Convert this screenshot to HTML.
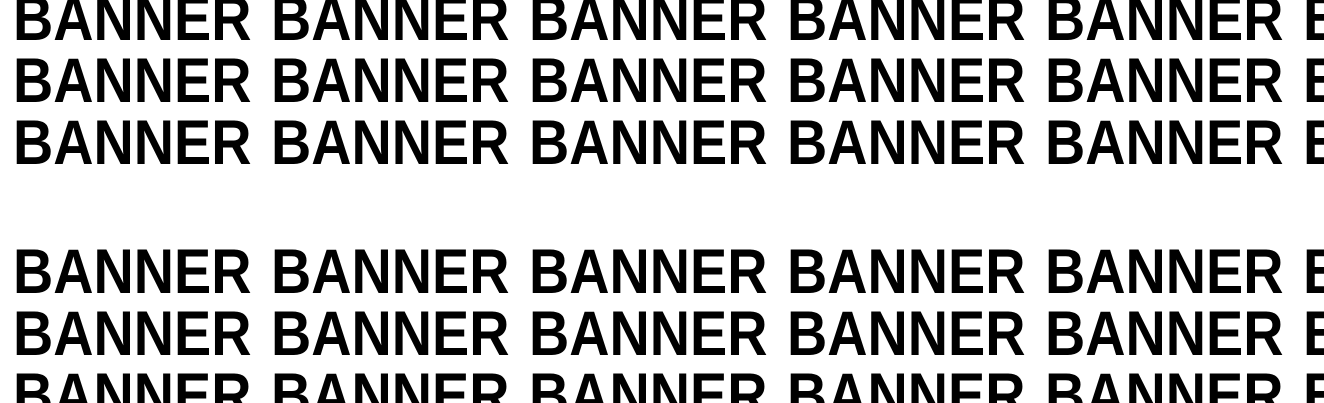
<!DOCTYPE html>
<html><head><style>
html,body{margin:0;padding:0;width:1324px;height:403px;overflow:hidden;background:#fff}
#c{position:relative;width:1324px;height:403px;overflow:hidden}
.r{position:absolute;left:0;height:63px;font:bold 63px/63px "Liberation Sans",sans-serif;color:#000;white-space:nowrap}
.r span{position:absolute;top:0;transform:scaleX(0.885);transform-origin:0 0}
</style></head><body>
<div id="c"></div>
<script>
var tops=[-12,50,112,241,303,365],h='';
tops.forEach(function(t){h+='<div class="r" style="top:'+t+'px">';for(var i=0;i<6;i++){var l=13+258*i;if(l<1324)h+='<span style="left:'+l+'px">BANNER</span>';}h+='</div>';});
document.getElementById('c').innerHTML=h;
</script>
</body></html>
